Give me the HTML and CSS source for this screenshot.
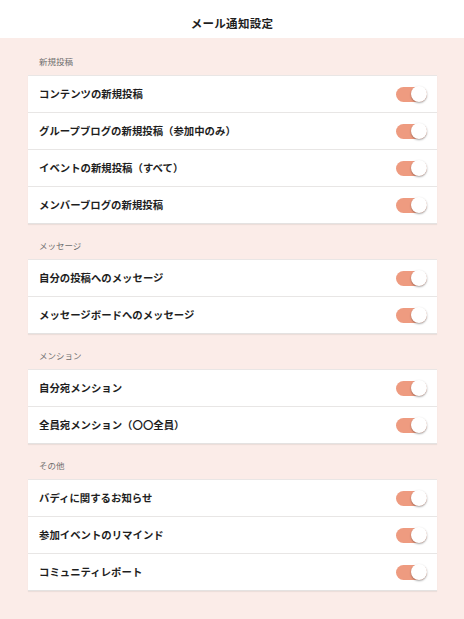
FILE: index.html
```html
<!DOCTYPE html>
<html lang="ja">
<head>
<meta charset="utf-8">
<link rel="stylesheet" href="styles.css">
</head>
<body>
<header class="header"><h1 class="title">メール通知設定</h1></header>
<main class="content">
  <section class="section">
    <div class="label">新規投稿</div>
    <ul class="card">
      <li class="row"><span class="name">コンテンツの新規投稿</span><span class="toggle"><span class="knob"></span></span></li>
      <li class="row"><span class="name">グループブログの新規投稿（参加中のみ）</span><span class="toggle"><span class="knob"></span></span></li>
      <li class="row"><span class="name">イベントの新規投稿（すべて）</span><span class="toggle"><span class="knob"></span></span></li>
      <li class="row"><span class="name">メンバーブログの新規投稿</span><span class="toggle"><span class="knob"></span></span></li>
    </ul>
  </section>
  <section class="section">
    <div class="label">メッセージ</div>
    <ul class="card">
      <li class="row"><span class="name">自分の投稿へのメッセージ</span><span class="toggle"><span class="knob"></span></span></li>
      <li class="row"><span class="name">メッセージボードへのメッセージ</span><span class="toggle"><span class="knob"></span></span></li>
    </ul>
  </section>
  <section class="section">
    <div class="label">メンション</div>
    <ul class="card">
      <li class="row"><span class="name">自分宛メンション</span><span class="toggle"><span class="knob"></span></span></li>
      <li class="row"><span class="name">全員宛メンション（〇〇全員）</span><span class="toggle"><span class="knob"></span></span></li>
    </ul>
  </section>
  <section class="section">
    <div class="label">その他</div>
    <ul class="card">
      <li class="row"><span class="name">バディに関するお知らせ</span><span class="toggle"><span class="knob"></span></span></li>
      <li class="row"><span class="name">参加イベントのリマインド</span><span class="toggle"><span class="knob"></span></span></li>
      <li class="row"><span class="name">コミュニティレポート</span><span class="toggle"><span class="knob"></span></span></li>
    </ul>
  </section>
</main>
</body>
</html>
```
FILE: styles.css
```css
* { box-sizing: border-box; }
html, body { margin: 0; padding: 0; }
body {
  width: 464px;
  height: 619px;
  background: #fbece8;
  font-family: "Noto Sans CJK JP", "Noto Sans", sans-serif;
  color: #1e1e1e;
  overflow: hidden;
}
.header {
  height: 38px;
  background: #ffffff;
  display: flex;
  align-items: center;
  justify-content: center;
}
.title {
  margin: 0;
  padding-top: 8px;
  font-size: 11.5px;
  font-weight: 700;
  letter-spacing: 0.3px;
  line-height: 14px;
}
.content {
  padding: 2px 27px 0 28px;
}
.label {
  height: 35px;
  display: flex;
  align-items: flex-end;
  padding: 0 0 8px 11px;
  font-size: 8.5px;
  line-height: 12px;
  color: #6e6e6e;
}
.card {
  list-style: none;
  margin: 0;
  padding: 0;
  background: #ffffff;
  border-top: 1px solid #e9e6e5;
  box-shadow: 0 1px 1px rgba(0, 0, 0, 0.06);
}
.row {
  height: 37px;
  border-bottom: 1px solid #e8e6e5;
  display: flex;
  align-items: center;
  justify-content: space-between;
  padding: 0 10px 0 11px;
}
.row:last-child { border-bottom-color: #e4e2e1; }
.name {
  font-size: 10.4px;
  font-weight: 700;
  line-height: 14px;
}
.toggle {
  position: relative;
  width: 31px;
  height: 15px;
  border-radius: 8px;
  background: #ee9b80;
}
.knob {
  position: absolute;
  right: 0;
  top: -0.5px;
  width: 16px;
  height: 16px;
  border-radius: 50%;
  background: #ffffff;
  box-shadow: 0 1px 2px rgba(0, 0, 0, 0.35);
}
```
